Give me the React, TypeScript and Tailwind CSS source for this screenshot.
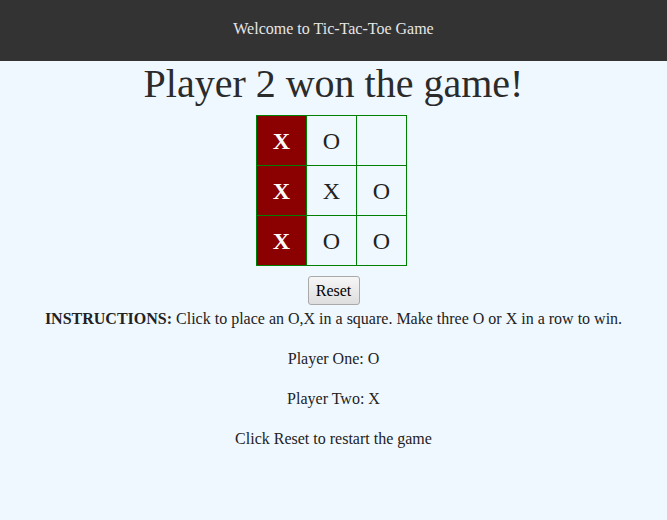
import React from "react";

const cells: { v: string; win?: boolean }[] = [
  { v: "X", win: true }, { v: "O" }, { v: "" },
  { v: "X", win: true }, { v: "X" }, { v: "O" },
  { v: "X", win: true }, { v: "O" }, { v: "O" },
];

export default function App() {
  return (
    <div className="min-h-[520px] w-full bg-[#f0f8ff] text-[#222] leading-[24px] text-[16px]" style={{ fontFamily: '"Liberation Serif", "Times New Roman", serif' }}>
      <header className="h-[61px] bg-[#333333] pt-[17px] text-center text-[#e6e6e6]">
        Welcome to Tic-Tac-Toe Game
      </header>
      <h1 className="m-0 text-center text-[40px] leading-[46px] text-[#2b2b2b]">Player 2 won the game!</h1>
      <div className="mt-[8px] flex justify-center">
        <div className="mr-[4px] grid grid-cols-[repeat(3,50px)] grid-rows-[repeat(3,50px)] border-l border-t border-[#008000]">
          {cells.map((c, i) => (
            <div
              key={i}
              className={
                "flex items-center justify-center border-r border-b border-[#008000] text-[24px] " +
                (c.win ? "bg-[#8b0000] font-bold text-white" : "text-[#222]")
              }
            >
              {c.v}
            </div>
          ))}
        </div>
      </div>
      <div className="mt-[10px] flex justify-center">
        <button className="h-[29px] w-[52px] rounded-[3px] border border-[#a9a9a9] bg-gradient-to-b from-[#f6f6f6] to-[#dedede] text-[16px] text-black">
          Reset
        </button>
      </div>
      <div className="pt-[2px] text-center">
        <div>
          <b>INSTRUCTIONS:</b> Click to place an O,X in a square. Make three O or X in a row to win.
        </div>
        <p className="my-[16px]">Player One: O</p>
        <p className="my-[16px]">Player Two: X</p>
        <p className="my-[16px]">Click Reset to restart the game</p>
      </div>
    </div>
  );
}
